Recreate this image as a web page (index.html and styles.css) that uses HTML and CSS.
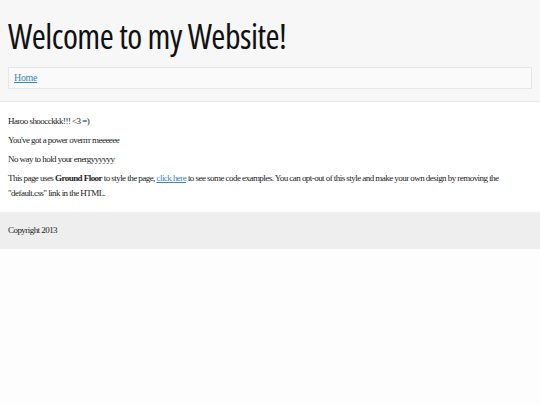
FILE: index.html
```html
<!DOCTYPE html>
<html>
<head>
    <meta charset="utf-8"/>
    <title>Welcome to my Website!</title>
    <link rel="stylesheet" href="styles.css">
</head>
<body>
<div class="header">
    <h1>Welcome to my Website!</h1>
    <ul class="nav">
        <li><a href="#">Home</a></li>
    </ul>
</div>
<div class="content">
    <p>Haroo shoocckkk!!! &lt;3 =)</p>
    <p>You've got a power overrrr meeeeee</p>
    <p>No way to hold your energyyyyyy</p>
    <p>This page uses <b>Ground Floor</b> to style the page, <a href="#">click here</a> to see some code examples. You can opt-out of this style and make your own design by removing the "default.css" link in the HTML.</p>
</div>
<div class="footer">
    <p>Copyright 2013</p>
</div>
</body>
</html>
```

FILE: styles.css
```css
* {
    margin: 0;
    padding: 0;
}

body {
    background: #fdfdfd;
    color: #222;
    font: 9px/15px "Liberation Serif", serif;
    letter-spacing: -0.55px;
}

ul li {
    list-style: none;
}

a {
    color: #3a87b8;
}

.header {
    background: #f7f7f7;
    border-bottom: 1px solid #e6e6e6;
    padding: 13px 8px 12px;
}

.header h1 {
    font: normal 34px/46px "Open Sans", sans-serif;
    font-stretch: 75%;
    letter-spacing: -0.5px;
    color: #111;
    margin-bottom: 8px;
}

.nav {
    background: #fafafa;
    border: 1px solid #e6e6e6;
    padding: 3px 5px;
    line-height: 14px;
    font-size: 10px;
    letter-spacing: -0.3px;
}

.content {
    background: #fff;
    padding: 12px 8px 7px;
}

.content p {
    margin-bottom: 4px;
}

.footer {
    background: #eeeeee;
    padding: 11px 8px;
}
```
